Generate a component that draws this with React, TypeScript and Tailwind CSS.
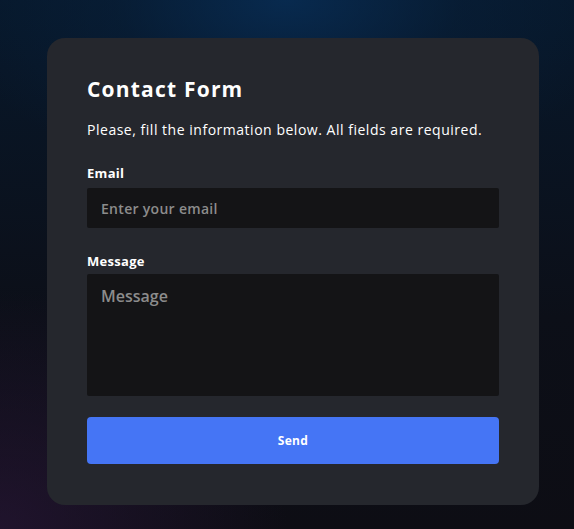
import React from "react";

export default function App() {
  return (
    <div
      className="min-h-screen w-full pt-[38px] pl-[47px] pb-[24px] bg-[#0b0f17]"
      style={{
        fontFamily: '"Open Sans", "Liberation Sans", sans-serif',
        backgroundImage:
          "radial-gradient(ellipse 60% 35% at 50% 0%, rgba(8,45,85,0.85) 0%, rgba(8,35,65,0.4) 50%, rgba(0,0,0,0) 100%), radial-gradient(ellipse 50% 45% at 0% 100%, rgba(40,22,55,0.7) 0%, rgba(0,0,0,0) 100%), linear-gradient(180deg, #07182b 0%, #0c0f18 60%, #0d0d14 100%)",
      }}
    >
      <div className="w-[492px] rounded-[18px] bg-[#25272d] px-10 pt-[36px] pb-[41px]">
        <h1 className="text-[21px] leading-[30px] font-bold text-white mb-[16px] tracking-[1.2px]">
          Contact Form
        </h1>
        <p className="text-[14px] leading-[20px] text-white mb-[24px] tracking-[0.52px]">
          Please, fill the information below. All fields are required.
        </p>
        <label className="block text-[13px] leading-[18px] font-bold text-white mb-[6px] tracking-[0.3px]">
          Email
        </label>
        <input
          type="email"
          placeholder="Enter your email"
          className="block w-full h-[40px] rounded-[2px] bg-[#141416] px-[14px] text-[14px] font-semibold tracking-[0.3px] text-white placeholder:text-[#8c8c8c] outline-none mb-[24px]"
        />
        <label className="block text-[13px] leading-[18px] font-bold text-white mb-[4px] tracking-[0.3px]">
          Message
        </label>
        <textarea
          placeholder="Message"
          className="block w-full h-[122px] resize-none rounded-[2px] bg-[#141416] px-[14px] py-[10px] text-[16px] font-semibold text-white placeholder:text-[#8c8c8c] outline-none mb-[21px]"
        />
        <button className="block w-full h-[47px] rounded-[4px] bg-[#4575f5] text-white text-[12px] font-bold tracking-[0.3px]">
          Send
        </button>
      </div>
    </div>
  );
}
